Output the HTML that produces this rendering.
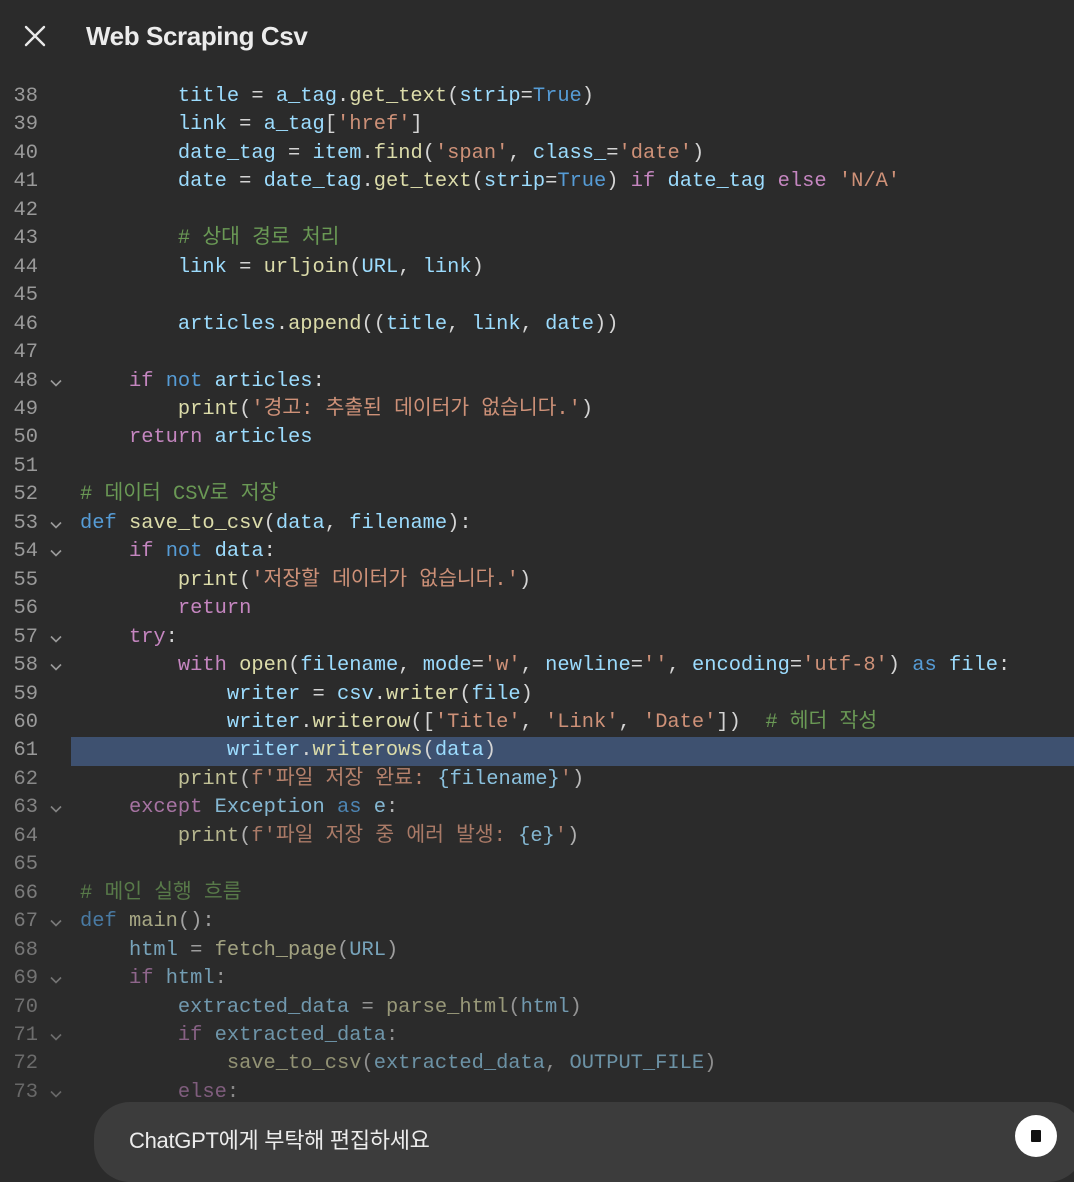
<!DOCTYPE html>
<html><head><meta charset="utf-8"><style>
body{margin:0;width:1074px;height:1172px;background:#2b2b2b;overflow:hidden;position:relative;font-family:"Liberation Sans","Noto Sans CJK KR",sans-serif}
.hdr{position:absolute;left:86px;top:21px;color:#ececec;font-size:26px;font-weight:bold;letter-spacing:-0.4px}
.x{position:absolute;left:24px;top:25px}
.code{position:absolute;left:0;top:83px;width:1074px;font-family:"Liberation Mono","Noto Sans CJK KR",monospace;font-size:20.4px;line-height:28.46px;color:#d4d4d4}
.l{position:relative;height:28.46px;white-space:pre}
.ln{position:absolute;left:0;width:38px;text-align:right;color:#9a9a9a}
.ch{position:absolute;left:49px;top:11px;width:14px;height:8px}
.t{position:absolute;left:80px}
.hl{background:#3e5170;margin-left:71px}
.hl .ln{left:-71px}
.v{color:#9cdcfe}.f{color:#dcdcaa}.s{color:#ce9178}.k{color:#c586c0}.b{color:#569cd6}.c{color:#6a9955}.g{color:#4ec9b0}
.bar{position:absolute;left:94px;top:1102px;width:990px;height:80px;border-radius:36px;background:#3c3c3c}
.bar span{position:absolute;left:35px;top:21px;color:#ececec;font-size:22px;letter-spacing:-0.3px}
.stop{position:absolute;left:1015px;top:1115px;width:42px;height:42px;border-radius:50%;background:#fff}
.stop i{position:absolute;left:16px;top:15px;width:10px;height:12px;background:#111;border-radius:1px}
</style></head><body>
<svg class="x" width="22" height="22" viewBox="0 0 22 22"><path d="M2 2L20 20M20 2L2 20" stroke="#e8e8e8" stroke-width="2.4" stroke-linecap="round"/></svg>
<div class="hdr">Web Scraping Csv</div>
<svg width="0" height="0" style="position:absolute"><defs><symbol id="cv" viewBox="0 0 14 8"><path d="M2 1.5L7 6.5L12 1.5" stroke="#9a9a9a" stroke-width="1.6" fill="none"/></symbol></defs></svg>
<div class="code">
<div class="l"><span class="ln">38</span><span class="t">        <span class="v">title</span> = <span class="v">a_tag</span>.<span class="f">get_text</span>(<span class="v">strip</span>=<span class="b">True</span>)</span></div>
<div class="l"><span class="ln">39</span><span class="t">        <span class="v">link</span> = <span class="v">a_tag</span>[<span class="s">'href'</span>]</span></div>
<div class="l"><span class="ln">40</span><span class="t">        <span class="v">date_tag</span> = <span class="v">item</span>.<span class="f">find</span>(<span class="s">'span'</span>, <span class="v">class_</span>=<span class="s">'date'</span>)</span></div>
<div class="l"><span class="ln">41</span><span class="t">        <span class="v">date</span> = <span class="v">date_tag</span>.<span class="f">get_text</span>(<span class="v">strip</span>=<span class="b">True</span>) <span class="k">if</span> <span class="v">date_tag</span> <span class="k">else</span> <span class="s">'N/A'</span></span></div>
<div class="l"><span class="ln">42</span></div>
<div class="l"><span class="ln">43</span><span class="t">        <span class="c"># 상대 경로 처리</span></span></div>
<div class="l"><span class="ln">44</span><span class="t">        <span class="v">link</span> = <span class="f">urljoin</span>(<span class="v">URL</span>, <span class="v">link</span>)</span></div>
<div class="l"><span class="ln">45</span></div>
<div class="l"><span class="ln">46</span><span class="t">        <span class="v">articles</span>.<span class="f">append</span>((<span class="v">title</span>, <span class="v">link</span>, <span class="v">date</span>))</span></div>
<div class="l"><span class="ln">47</span></div>
<div class="l"><span class="ln">48</span><svg class="ch"><use href="#cv"/></svg><span class="t">    <span class="k">if</span> <span class="b">not</span> <span class="v">articles</span>:</span></div>
<div class="l"><span class="ln">49</span><span class="t">        <span class="f">print</span>(<span class="s">'경고: 추출된 데이터가 없습니다.'</span>)</span></div>
<div class="l"><span class="ln">50</span><span class="t">    <span class="k">return</span> <span class="v">articles</span></span></div>
<div class="l"><span class="ln">51</span></div>
<div class="l"><span class="ln">52</span><span class="t"><span class="c"># 데이터 CSV로 저장</span></span></div>
<div class="l"><span class="ln">53</span><svg class="ch"><use href="#cv"/></svg><span class="t"><span class="b">def</span> <span class="f">save_to_csv</span>(<span class="v">data</span>, <span class="v">filename</span>):</span></div>
<div class="l"><span class="ln">54</span><svg class="ch"><use href="#cv"/></svg><span class="t">    <span class="k">if</span> <span class="b">not</span> <span class="v">data</span>:</span></div>
<div class="l"><span class="ln">55</span><span class="t">        <span class="f">print</span>(<span class="s">'저장할 데이터가 없습니다.'</span>)</span></div>
<div class="l"><span class="ln">56</span><span class="t">        <span class="k">return</span></span></div>
<div class="l"><span class="ln">57</span><svg class="ch"><use href="#cv"/></svg><span class="t">    <span class="k">try</span>:</span></div>
<div class="l"><span class="ln">58</span><svg class="ch"><use href="#cv"/></svg><span class="t">        <span class="k">with</span> <span class="f">open</span>(<span class="v">filename</span>, <span class="v">mode</span>=<span class="s">'w'</span>, <span class="v">newline</span>=<span class="s">''</span>, <span class="v">encoding</span>=<span class="s">'utf-8'</span>) <span class="b">as</span> <span class="v">file</span>:</span></div>
<div class="l"><span class="ln">59</span><span class="t">            <span class="v">writer</span> = <span class="v">csv</span>.<span class="f">writer</span>(<span class="v">file</span>)</span></div>
<div class="l"><span class="ln">60</span><span class="t">            <span class="v">writer</span>.<span class="f">writerow</span>([<span class="s">'Title'</span>, <span class="s">'Link'</span>, <span class="s">'Date'</span>])  <span class="c"># 헤더 작성</span></span></div>
<div class="l hl"><span class="ln">61</span><span class="t" style="left:9px">            <span class="v">writer</span>.<span class="f">writerows</span>(<span class="v">data</span>)</span></div>
<div class="l" style="opacity:.85"><span class="ln">62</span><span class="t">        <span class="f">print</span>(<span class="s">f'파일 저장 완료: </span><span class="v">{filename}</span><span class="s">'</span>)</span></div>
<div class="l" style="opacity:.8"><span class="ln">63</span><svg class="ch"><use href="#cv"/></svg><span class="t">    <span class="k">except</span> <span class="v">Exception</span> <span class="b">as</span> <span class="v">e</span>:</span></div>
<div class="l" style="opacity:.78"><span class="ln">64</span><span class="t">        <span class="f">print</span>(<span class="s">f'파일 저장 중 에러 발생: </span><span class="v">{e}</span><span class="s">'</span>)</span></div>
<div class="l" style="opacity:.75"><span class="ln">65</span></div>
<div class="l" style="opacity:.72"><span class="ln">66</span><span class="t"><span class="c"># 메인 실행 흐름</span></span></div>
<div class="l" style="opacity:.7"><span class="ln">67</span><svg class="ch"><use href="#cv"/></svg><span class="t"><span class="b">def</span> <span class="f">main</span>():</span></div>
<div class="l" style="opacity:.68"><span class="ln">68</span><span class="t">    <span class="v">html</span> = <span class="f">fetch_page</span>(<span class="v">URL</span>)</span></div>
<div class="l" style="opacity:.65"><span class="ln">69</span><svg class="ch"><use href="#cv"/></svg><span class="t">    <span class="k">if</span> <span class="v">html</span>:</span></div>
<div class="l" style="opacity:.62"><span class="ln">70</span><span class="t">        <span class="v">extracted_data</span> = <span class="f">parse_html</span>(<span class="v">html</span>)</span></div>
<div class="l" style="opacity:.6"><span class="ln">71</span><svg class="ch"><use href="#cv"/></svg><span class="t">        <span class="k">if</span> <span class="v">extracted_data</span>:</span></div>
<div class="l" style="opacity:.58"><span class="ln">72</span><span class="t">            <span class="f">save_to_csv</span>(<span class="v">extracted_data</span>, <span class="v">OUTPUT_FILE</span>)</span></div>
<div class="l" style="opacity:.55"><span class="ln">73</span><svg class="ch"><use href="#cv"/></svg><span class="t">        <span class="k">else</span>:</span></div>
</div>
<div class="bar"><span>ChatGPT에게 부탁해 편집하세요</span></div>
<div class="stop"><i></i></div>
</body></html>
